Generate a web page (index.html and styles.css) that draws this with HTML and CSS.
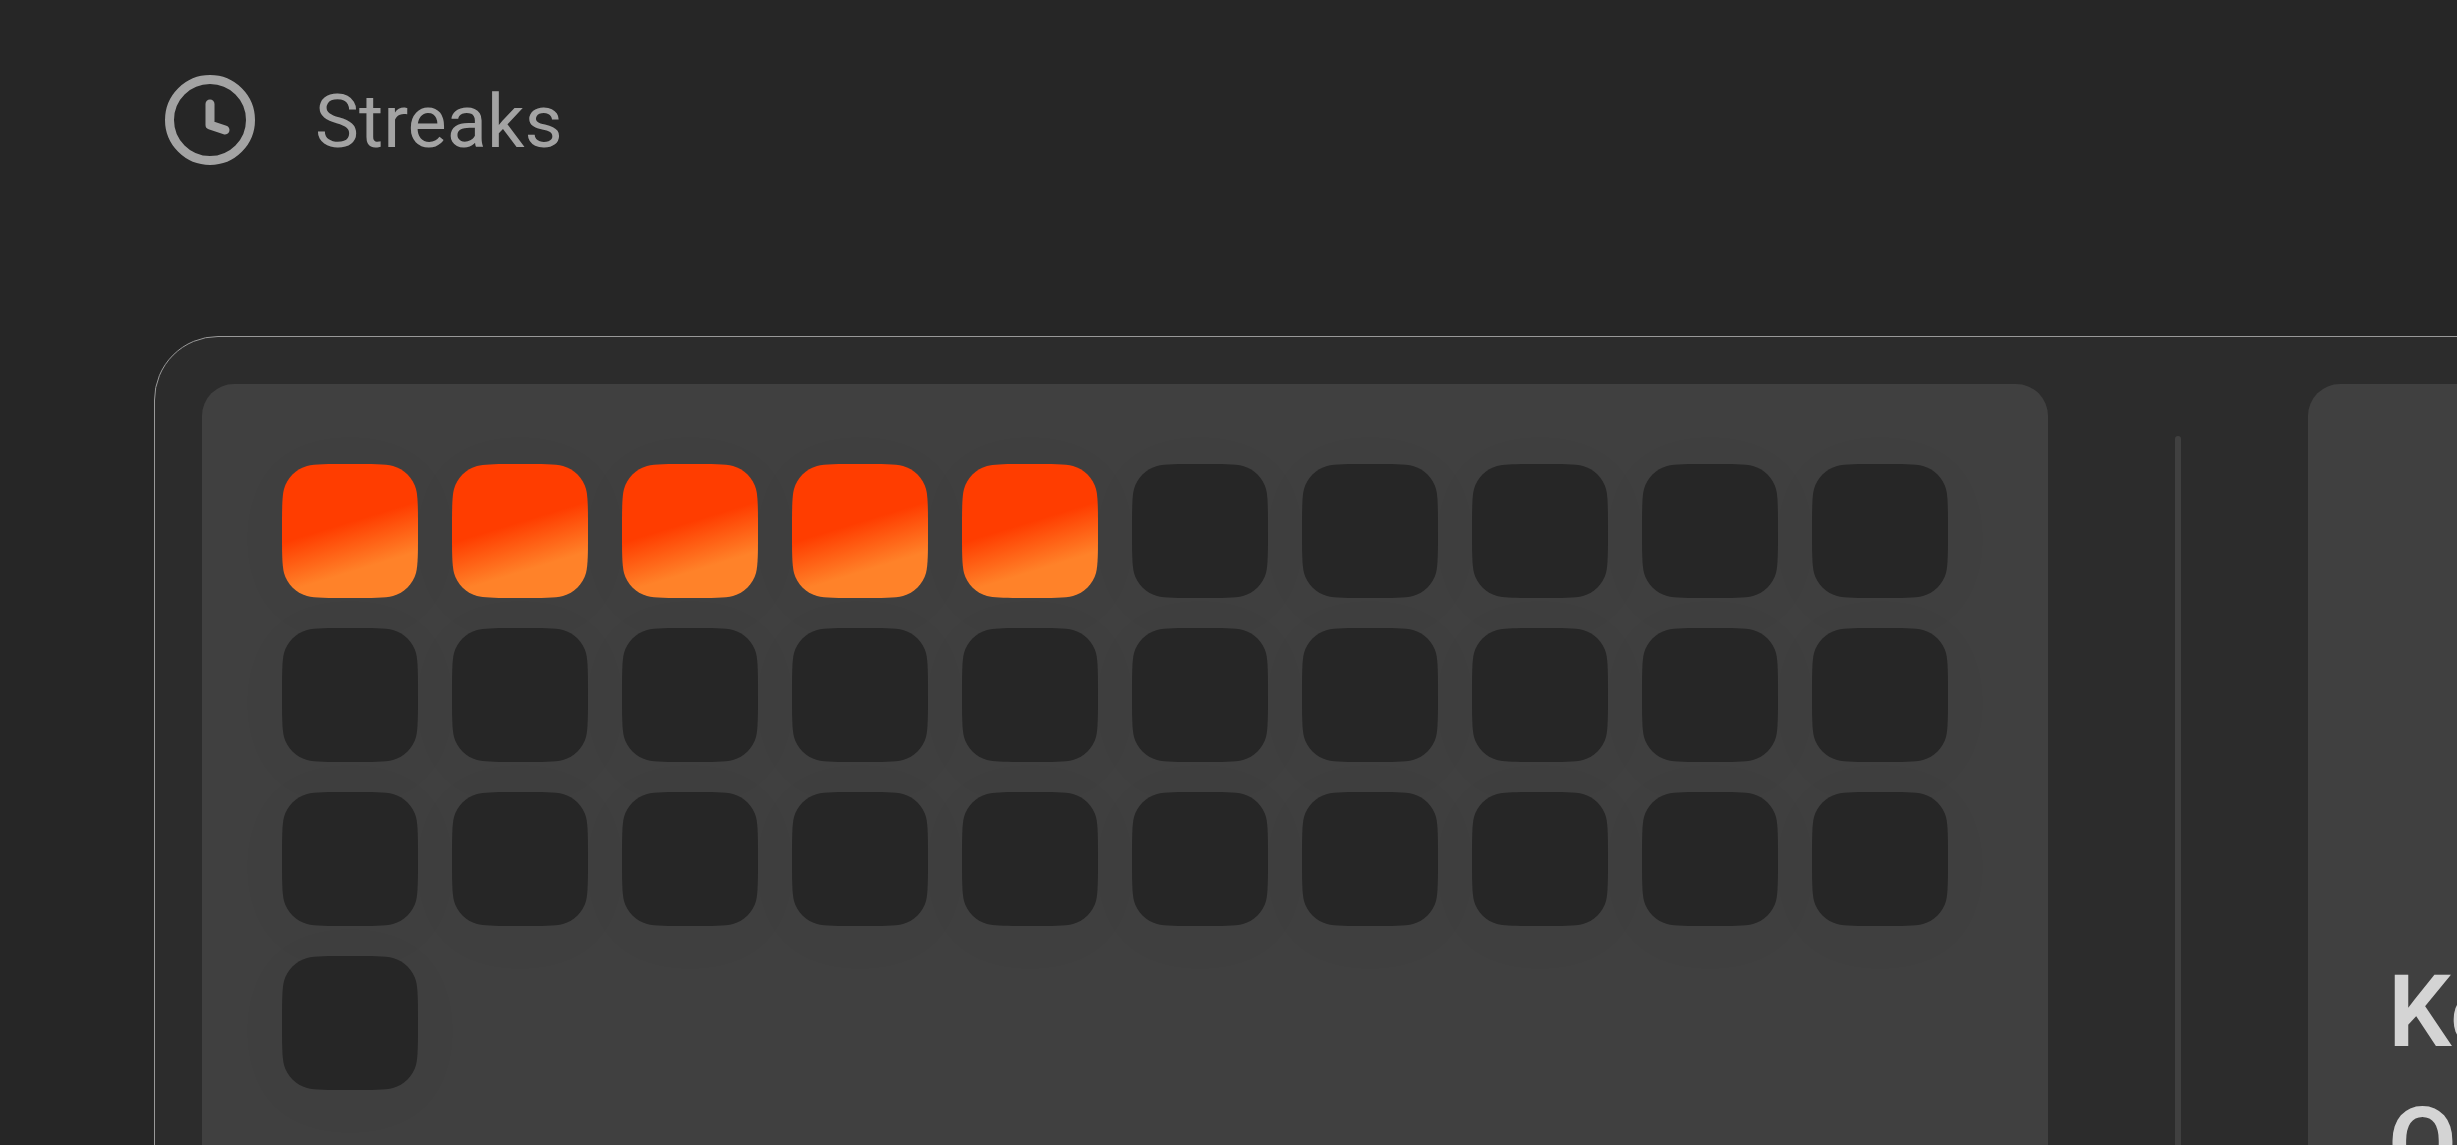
FILE: index.html
```html
<!DOCTYPE html>
<html lang="en">
<head>
<meta charset="utf-8">
<title>Streaks</title>
<link rel="stylesheet" href="styles.css">
</head>
<body>
<svg class="defs" width="0" height="0" aria-hidden="true">
  <defs>
    <linearGradient id="flame" gradientUnits="userSpaceOnUse" x1="22" y1="72" x2="36" y2="118">
      <stop offset="0" stop-color="#ff3d00"/>
      <stop offset="1" stop-color="#ff8229"/>
    </linearGradient>
    <symbol id="tile" viewBox="0 0 136 134">
      <path d="M0 67C0 46 0 33 2 25C5 14 14 5 25 2C33 0 46 0 68 0C90 0 103 0 111 2C122 5 131 14 134 25C136 33 136 46 136 67C136 88 136 101 134 109C131 120 122 129 111 132C103 134 90 134 68 134C46 134 33 134 25 132C14 129 5 120 2 109C0 101 0 88 0 67Z"/>
    </symbol>
  </defs>
</svg>
<header class="header">
  <svg class="clock" viewBox="0 0 90 90" aria-hidden="true">
    <circle cx="45" cy="45" r="40.5"/>
    <path d="M45 29V50L60 55"/>
  </svg>
  <h1 class="title">Streaks</h1>
</header>
<main class="panel">
  <section class="card calendar">
    <ul class="days">
      <li class="day done"><svg><use href="#tile"/></svg></li>
      <li class="day done"><svg><use href="#tile"/></svg></li>
      <li class="day done"><svg><use href="#tile"/></svg></li>
      <li class="day done"><svg><use href="#tile"/></svg></li>
      <li class="day done"><svg><use href="#tile"/></svg></li>
      <li class="day"><svg><use href="#tile"/></svg></li>
      <li class="day"><svg><use href="#tile"/></svg></li>
      <li class="day"><svg><use href="#tile"/></svg></li>
      <li class="day"><svg><use href="#tile"/></svg></li>
      <li class="day"><svg><use href="#tile"/></svg></li>
      <li class="day"><svg><use href="#tile"/></svg></li>
      <li class="day"><svg><use href="#tile"/></svg></li>
      <li class="day"><svg><use href="#tile"/></svg></li>
      <li class="day"><svg><use href="#tile"/></svg></li>
      <li class="day"><svg><use href="#tile"/></svg></li>
      <li class="day"><svg><use href="#tile"/></svg></li>
      <li class="day"><svg><use href="#tile"/></svg></li>
      <li class="day"><svg><use href="#tile"/></svg></li>
      <li class="day"><svg><use href="#tile"/></svg></li>
      <li class="day"><svg><use href="#tile"/></svg></li>
      <li class="day"><svg><use href="#tile"/></svg></li>
      <li class="day"><svg><use href="#tile"/></svg></li>
      <li class="day"><svg><use href="#tile"/></svg></li>
      <li class="day"><svg><use href="#tile"/></svg></li>
      <li class="day"><svg><use href="#tile"/></svg></li>
      <li class="day"><svg><use href="#tile"/></svg></li>
      <li class="day"><svg><use href="#tile"/></svg></li>
      <li class="day"><svg><use href="#tile"/></svg></li>
      <li class="day"><svg><use href="#tile"/></svg></li>
      <li class="day"><svg><use href="#tile"/></svg></li>
      <li class="day"><svg><use href="#tile"/></svg></li>
    </ul>
  </section>
  <div class="divider"></div>
  <section class="card message">
    <p class="slogan">Ke<br>O</p>
  </section>
</main>
</body>
</html>
```
FILE: styles.css
```css
* {
  box-sizing: border-box;
}

body {
  height: 100vh;
  margin: 0;
  padding: 75px 0 0 154px;
  overflow: hidden;
  background: #262626;
  font-family: Roboto, "Liberation Sans", sans-serif;
}

.defs {
  position: absolute;
}

.header {
  display: flex;
  align-items: center;
  gap: 60px;
  padding-left: 11px;
  margin-bottom: 167px;
}

.clock {
  width: 90px;
  height: 90px;
  margin-bottom: 4px;
  fill: none;
  stroke: #a3a3a3;
  stroke-width: 9;
  stroke-linecap: round;
  stroke-linejoin: round;
}

.title {
  margin: 0;
  color: #a3a3a3;
  font-size: 74px;
  font-weight: 400;
  line-height: 94px;
}

.panel {
  display: flex;
  width: max-content;
  padding: 47px;
  gap: 127px;
  border: 1px solid #999999;
  border-radius: 64px;
  background: #2c2c2c;
}

.card {
  padding: 80px;
  border-radius: 32px;
  background: #404040;
}

.calendar {
  padding-right: 100px;
}

.days {
  display: grid;
  grid-template-columns: repeat(10, 136px);
  gap: 30px 34px;
  margin: 0;
  padding: 0;
  list-style: none;
}

.day {
  height: 134px;
  border-radius: 40px;
  box-shadow: 0 8px 64px rgba(0, 0, 0, 0.03);
  fill: #262626;
}

.day svg {
  display: block;
  width: 100%;
  height: 100%;
}

.done {
  fill: url(#flame);
}

.divider {
  width: 6px;
  margin: 52px 0;
  border-radius: 3px;
  background: #404040;
}

.message {
  display: flex;
  align-items: flex-end;
  min-width: 900px;
  min-height: 906px;
}

.slogan {
  margin: 0;
  color: #d4d4d4;
  font-size: 100px;
  font-weight: 600;
  line-height: 132px;
}
```
